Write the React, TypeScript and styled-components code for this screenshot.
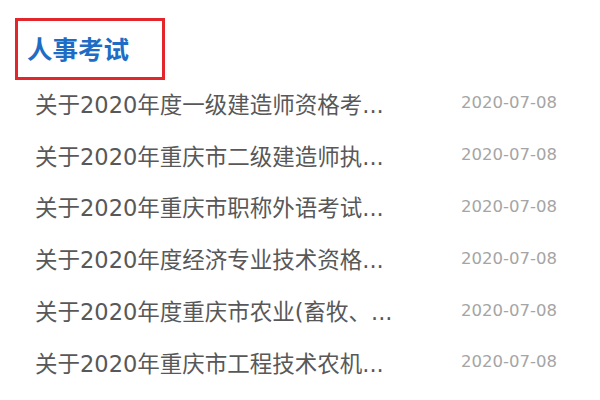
import React from 'react';
import styled, { createGlobalStyle } from 'styled-components';

type NewsItem = {
  title: string;
  date: string;
};

const news: NewsItem[] = [
  { title: '关于2020年度一级建造师资格考...', date: '2020-07-08' },
  { title: '关于2020年重庆市二级建造师执...', date: '2020-07-08' },
  { title: '关于2020年重庆市职称外语考试...', date: '2020-07-08' },
  { title: '关于2020年度经济专业技术资格...', date: '2020-07-08' },
  { title: '关于2020年度重庆市农业(畜牧、...', date: '2020-07-08' },
  { title: '关于2020年重庆市工程技术农机...', date: '2020-07-08' },
];

const GlobalStyle = createGlobalStyle`
  html, body {
    margin: 0;
    padding: 0;
    background: #ffffff;
  }
  body {
    font-family: "Noto Sans CJK SC", "Noto Sans", sans-serif;
  }
`;

const Panel = styled.section`
  width: 600px;
  height: 400px;
  padding: 18px 0 0 15px;
  box-sizing: border-box;
`;

const TitleBox = styled.div`
  width: 150px;
  height: 62px;
  box-sizing: border-box;
  border: 3px solid #e3262c;
  display: flex;
  align-items: center;
  padding: 0 0 4px 9px;
`;

const Title = styled.h2`
  margin: 0;
  font-size: 25.5px;
  font-weight: 700;
  color: #1d6dc6;
`;

const List = styled.ul`
  list-style: none;
  margin: -3px 0 0 0;
  padding: 0 0 0 20px;
  width: 522px;
`;

const Row = styled.li`
  height: 51.8px;
  display: flex;
  align-items: center;
  justify-content: space-between;
`;

const RowTitle = styled.span`
  font-family: "DejaVu Sans", "Noto Sans CJK SC", sans-serif;
  font-size: 22.5px;
  color: #585858;
  white-space: nowrap;
`;

const RowDate = styled.span`
  font-family: "DejaVu Sans", "Noto Sans", sans-serif;
  font-size: 16.5px;
  color: #a5a5a5;
`;

export default function App() {
  return (
    <>
      <GlobalStyle />
      <Panel>
        <TitleBox>
          <Title>人事考试</Title>
        </TitleBox>
        <List>
          {news.map((item, index) => (
            <Row key={`${index}-${item.date}`}>
              <RowTitle>{item.title}</RowTitle>
              <RowDate>{item.date}</RowDate>
            </Row>
          ))}
        </List>
      </Panel>
    </>
  );
}
